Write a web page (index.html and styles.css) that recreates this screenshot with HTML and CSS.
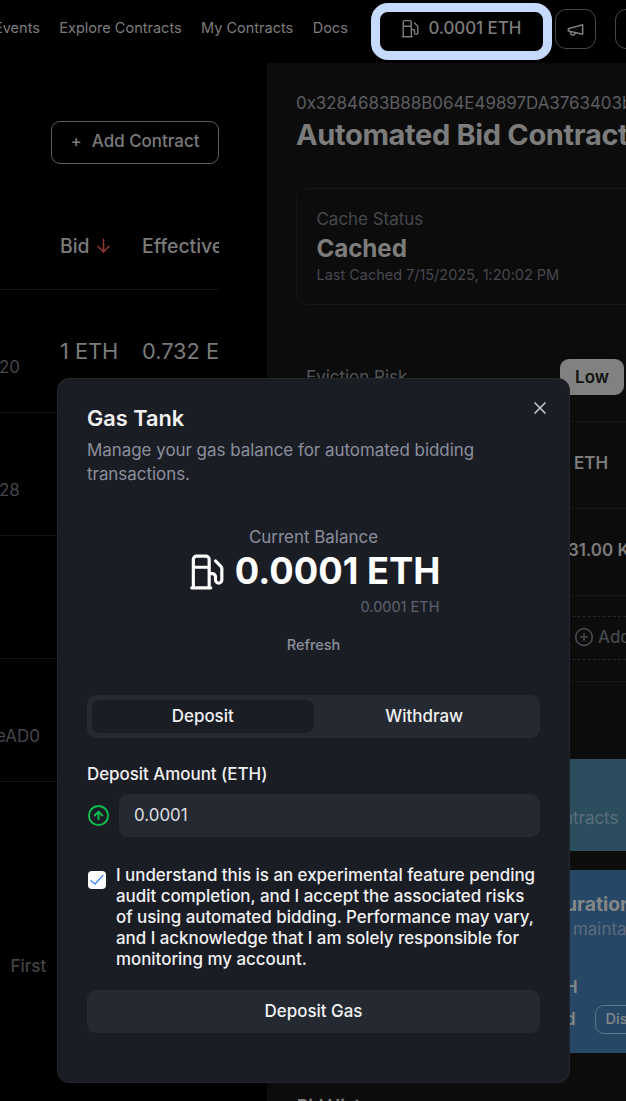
FILE: index.html
```html
<!DOCTYPE html>
<html lang="en">
<head>
<meta charset="utf-8">
<title>Gas Tank</title>
<link rel="stylesheet" href="styles.css">
</head>
<body>
<div class="app">
  <header class="topbar">
    <nav class="nav"><a>Events</a><a>Explore Contracts</a><a>My Contracts</a><a>Docs</a></nav>
    <div class="gas-pill">
      <svg class="gas-icon" viewBox="0 0 24 24"><path d="M3 22h12M4 9h10M14 22V4a2 2 0 0 0-2-2H6a2 2 0 0 0-2 2v18M14 13h2a2 2 0 0 1 2 2v2a2 2 0 0 0 4 0V9.8a2 2 0 0 0-.6-1.4L18 5"/></svg>
      <span>0.0001 ETH</span>
    </div>
    <div class="icon-button"><svg viewBox="0 0 24 24"><path d="m3 11 18-5v12L3 14v-3zM11.6 16.8a3 3 0 1 1-5.800-1.600"/></svg></div>
    <div class="icon-button next"><svg viewBox="0 0 24 24"><circle cx="12" cy="12" r="8"/></svg></div>
  </header>
  <main class="main">
    <section class="list">
      <div class="add-contract"><span class="plus">+</span><span>Add Contract</span></div>
      <div class="table">
        <div class="row head"><span></span><span class="bid">Bid <svg viewBox="0 0 24 24"><path d="M12 4v16M5 13l7 7 7-7"/></svg></span><span>Effective</span></div>
        <div class="row"><span class="addr">20</span><span>1 ETH</span><span>0.732 ETH</span></div>
        <div class="row"><span class="addr">28</span></div>
        <div class="row"></div>
        <div class="row"><span class="addr ad">eAD0</span></div>
      </div>
      <div class="pager">First</div>
    </section>
    <section class="detail">
      <div class="hash">0x3284683B88B064E49897DA3763403b</div>
      <h1 class="title">Automated Bid Contract</h1>
      <div class="cache">
        <div class="cache-label">Cache Status</div>
        <div class="cache-value">Cached</div>
        <div class="cache-time">Last Cached 7/15/2025, 1:20:02 PM</div>
      </div>
      <div class="stat risk"><span>Eviction Risk</span><b class="badge">Low</b></div>
      <div class="stat eth"><b>ETH</b></div>
      <div class="stat size"><b>31.00 KB</b></div>
      <div class="stat tags"><div class="add-tag"><svg viewBox="0 0 24 24"><circle cx="12" cy="12" r="10"/><path d="M8 12h8M12 8v8"/></svg>Add</div></div>
      <div class="banner teal"><span>ntracts</span></div>
      <div class="banner blue">
        <b class="b-title">uration</b><span class="b-sub">mainta</span><b class="b-eth">H</b>
        <div class="b-row"><b>d</b><span class="b-btn">Disable</span></div>
      </div>
      <h2 class="history">Bid History</h2>
    </section>
  </main>
  <div class="dialog">
    <svg class="close" viewBox="0 0 24 24"><path d="M18 6 6 18M6 6l12 12"/></svg>
    <h2 class="d-title">Gas Tank</h2>
    <p class="d-desc">Manage your gas balance for automated bidding<br>transactions.</p>
    <div class="balance">
      <div class="bal-label">Current Balance</div>
      <div class="bal-main">
        <svg class="gas-icon" viewBox="0 0 24 24"><path d="M3 22h12M4 9h10M14 22V4a2 2 0 0 0-2-2H6a2 2 0 0 0-2 2v18M14 13h2a2 2 0 0 1 2 2v2a2 2 0 0 0 4 0V9.8a2 2 0 0 0-.6-1.4L18 5"/></svg>
        <span>0.0001 ETH</span>
      </div>
      <div class="bal-sub">0.0001 ETH</div>
      <div class="refresh">Refresh</div>
    </div>
    <div class="tabs"><div class="tab active">Deposit</div><div class="tab">Withdraw</div></div>
    <div class="field-label">Deposit Amount (ETH)</div>
    <div class="field">
      <svg viewBox="0 0 24 24"><circle cx="12" cy="12" r="10"/><path d="m16 12-4-4-4 4M12 16V8"/></svg>
      <div class="input">0.0001</div>
    </div>
    <div class="consent">
      <div class="check"><svg viewBox="0 0 24 24"><path d="M21 5 9 18l-6-5"/></svg></div>
      <p>I understand this is an experimental feature pending<br>audit completion, and I accept the associated risks<br>of using automated bidding. Performance may vary,<br>and I acknowledge that I am solely responsible for<br>monitoring my account.</p>
    </div>
    <div class="submit">Deposit Gas</div>
  </div>
</div>
</body>
</html>
```
FILE: styles.css
```css
* { box-sizing: border-box; }
body { margin: 0; background: #000; font-family: Inter, "Liberation Sans", sans-serif; }
h1, h2, p { margin: 0; }
svg { fill: none; stroke: currentColor; stroke-width: 2; stroke-linecap: round; stroke-linejoin: round; flex: none; }
.app { position: relative; width: 626px; height: 1101px; overflow: hidden; display: flex; flex-direction: column; white-space: nowrap; }

.topbar { height: 63px; flex: none; display: flex; align-items: flex-start; color: #7c7c7c; }
.nav { display: flex; gap: 19.400px; width: 368px; flex: none; padding-top: 18px; font-size: 14.520px; line-height: 21px; margin-left: -6px; }
.gas-pill { width: 181px; height: 57px; flex: none; margin: 3px 3px 0 9px; border: 9px solid #c5dafd; border-radius: 17px; display: flex; align-items: center; padding: 0 0 7px 20px; gap: 9px; font-size: 16.940px; font-weight: 500; letter-spacing: -0.05px; }
.gas-pill .gas-icon { width: 19.400px; height: 19.400px; stroke-width: 1.800; margin-top: 2px; }
.icon-button { width: 41px; height: 40px; flex: none; margin-top: 9px; border: 1px solid #484848; border-radius: 11px; display: flex; align-items: center; justify-content: center; }
.icon-button svg { width: 19px; height: 19px; }
.next { margin-left: 19px; }

.main { flex: 1; display: grid; grid-template-columns: 267px 359px; min-height: 0; }
.list { padding: 58px 48px 0 0; overflow: hidden; color: #7b7b7b; }
.add-contract { width: 168px; height: 43px; margin-left: 51px; border: 1px solid #5c5c5c; border-radius: 9px; display: flex; align-items: center; justify-content: center; gap: 10px; font-size: 16.940px; font-weight: 500; padding-bottom: 3px; }
.plus { font-size: 16.940px; }
.table { margin-top: 38px; }
.row { height: 123px; display: grid; grid-template-columns: 60px 82px 77px; align-items: center; font-size: 21.780px; overflow: hidden; border-bottom: 1px solid #151515; }
.row > span { white-space: nowrap; }
.head { height: 88px; font-weight: 500; }
.row.head { font-size: 19.360px; }
.bid { display: flex; align-items: center; gap: 4px; }
.bid svg { width: 19px; height: 19px; color: #8b3434; }
.addr { font-size: 16.940px; color: #45474c; padding-top: 31px; margin-left: -1px; }
.ad { margin-left: -4px; }
.pager { margin: 173px 0 0 10.500px; font-size: 16.940px; line-height: 22px; font-weight: 500; color: #434343; }

.detail { background: #0c0c0c; padding: 29px 0 0 29px; overflow: hidden; color: #7c7c7c; }
.hash { font-size: 16.940px; line-height: 22px; letter-spacing: -0.03px; color: #5d5e61; }
.title { font-size: 29.040px; line-height: 36px; margin-top: 3px; font-weight: 700; letter-spacing: -0.360px; }
.cache { height: 117px; width: 360px; margin: 35px 0 0; border: 1px solid #151515; border-radius: 10px; padding: 19px 19.500px; }
.cache-label { font-size: 16.940px; line-height: 22px; color: #46484e; }
.cache-value { font-size: 24.200px; line-height: 36px; font-weight: 700; padding-top: 1px; height: 36px; letter-spacing: -0.1px; }
.cache-time { font-size: 14.520px; line-height: 18px; letter-spacing: -0.03px; color: #46484e; }
.stat { display: flex; align-items: center; border-bottom: 1px solid #151515; font-size: 16.940px; height: 87px; padding-bottom: 4px; }
.stat b { font-weight: 600; }
.risk { height: 117px; padding: 28px 0 0 10px; justify-content: space-between; color: #55565a; }
.stat .badge { width: 64px; height: 36px; margin-right: 2px; background: #818181; color: #111; border-radius: 9px; display: grid; place-items: center; padding-bottom: 1px; }
.eth { padding-left: 278px; }
.size { padding-left: 272px; }
.tags { height: 86px; padding-bottom: 1px; }
.add-tag { width: 340px; height: 44px; border: 1px dashed #24262b; border-width: 1px 0; display: flex; align-items: center; gap: 4px; padding: 0 0 2px 278px; font-weight: 500; color: #45484e; }
.add-tag svg { width: 20px; height: 20px; }
.banner { margin-left: 10px; }
.teal { height: 92px; margin-top: 77px; background: #2b4d5e; padding: 49px 0 0 257px; font-size: 16.940px; color: #5c6d7b; }
.blue { height: 183px; margin-top: 19px; background: #274766; display: flex; flex-direction: column; padding-left: 259px; color: #858789; }
.b-title { font-size: 19.360px; line-height: 26px; margin-top: 21px; }
.b-sub { font-size: 16.940px; line-height: 24px; padding-left: 8px; color: #5d6b7d; }
.b-eth { font-size: 16.940px; line-height: 24px; margin-top: 34px; font-weight: 600; }
.b-row { display: flex; align-items: center; gap: 19px; margin-top: 6px; font-size: 16.940px; }
.b-row b { font-weight: 600; padding-bottom: 2px; }
.b-btn { height: 29px; width: 80px; border: 1px solid #60768a; border-radius: 9px; padding: 4px 10px; font-size: 14.520px; font-weight: 500; }
.history { font-size: 16.940px; line-height: 24px; margin: 41px 0 0 1px; }

.dialog { position: absolute; left: 57px; top: 378px; width: 513px; height: 705px; background: #1b1d25; border: 1px solid #24262e; border-radius: 12px; padding: 24px 29px; color: #f1f1f2; }
.close { position: absolute; right: 19px; top: 19px; width: 20px; height: 20px; color: #c9c9cb; }
.d-title { font-size: 21.780px; line-height: 30px; font-weight: 600; }
.d-desc { font-size: 16.940px; line-height: 24px; margin-top: 5px; letter-spacing: -0.02px; color: #8b8f9c; }
.balance { width: 252px; margin: 39px auto 0; display: flex; flex-direction: column; align-items: center; color: #8b8f9c; }
.bal-label { font-size: 16.940px; line-height: 24px; }
.bal-main { display: flex; align-items: center; gap: 10px; font-size: 36.300px; line-height: 44px; font-weight: 700; color: #fff; }
.bal-main svg { width: 38px; height: 38px; margin-top: 2px; }
.bal-sub { align-self: flex-end; font-size: 14.520px; line-height: 20px; margin-top: 4px; color: #5f6370; }
.refresh { font-size: 14.520px; line-height: 20px; font-weight: 500; margin-top: 18px; }
.tabs { display: grid; grid-template-columns: 1fr 1fr; height: 43px; margin-top: 40px; padding: 5px; background: #252932; border-radius: 9px; font-size: 16.940px; font-weight: 500; }
.tab { display: grid; place-items: center; border-radius: 8px; padding-bottom: 2px; }
.active { background: #1b1d25; }
.field-label { font-size: 16.940px; line-height: 20px; font-weight: 500; letter-spacing: -0.03px; margin-top: 26px; }
.field { display: flex; align-items: center; gap: 9px; margin-top: 10px; color: #0ebd4f; }
.field svg { width: 23px; height: 23px; }
.input { flex: 1; height: 43px; border-radius: 9px; background: #252932; color: #dedee0; font-size: 16.940px; padding: 0 15px; line-height: 42px; }
.consent { display: flex; gap: 10px; margin-top: 28px; font-size: 16.940px; line-height: 21px; font-weight: 500; letter-spacing: -0.03px; }
.check { width: 18px; height: 18px; margin: 6px 0 0 1px; flex: none; background: #fff; border-radius: 4px; color: #3b82f6; display: grid; place-items: center; }
.check svg { width: 16px; height: 16px; }
.submit { height: 43px; margin-top: 20px; background: #252932; border-radius: 9px; display: grid; place-items: center; font-size: 16.940px; font-weight: 500; padding-bottom: 2px; }
```
